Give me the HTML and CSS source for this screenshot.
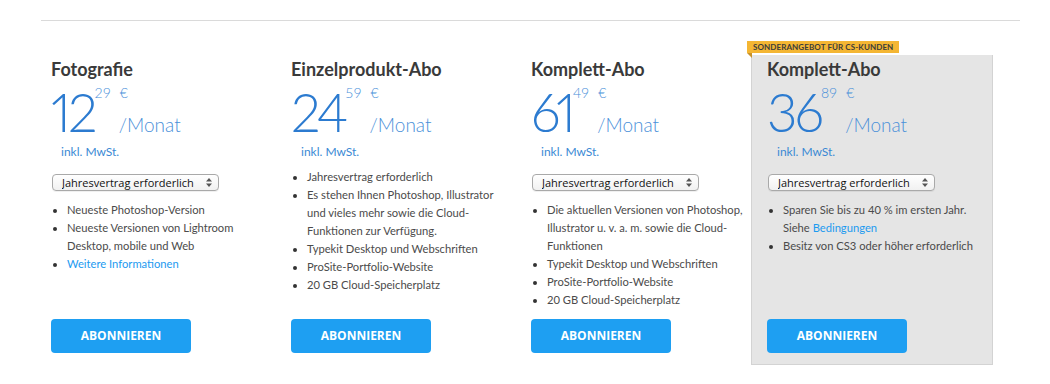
FILE: index.html
```html
<!DOCTYPE html>
<html>
<head>
<title>Abo</title>
<link rel="stylesheet" href="styles.css">
</head>
<body>
<div class="rule"></div>
<div class="plans">

  <div class="plan">
    <div class="name">Fotografie</div>
    <div class="price">
      <span class="big">12</span>
      <span class="cents">29</span>
      <span class="unit"><span>€</span><span class="month">/Monat</span></span>
    </div>
    <div class="tax">inkl. MwSt.</div>
    <div class="pick">
      <select><option>Jahresvertrag erforderlich</option></select>
      <svg class="arrows" width="6" height="9" viewBox="0 0 6 9"><path d="M3 0 L6 3.5 H0 Z M3 9 L6 5.5 H0 Z" fill="#555"/></svg>
    </div>
    <ul class="feats">
      <li>Neueste Photoshop-Version</li>
      <li>Neueste Versionen von Lightroom Desktop, mobile und Web</li>
      <li><a href="#">Weitere Informationen</a></li>
    </ul>
    <a class="buy" href="#">ABONNIEREN</a>
  </div>

  <div class="plan">
    <div class="name">Einzelprodukt-Abo</div>
    <div class="price">
      <span class="big">24</span>
      <span class="cents">59</span>
      <span class="unit"><span>€</span><span class="month">/Monat</span></span>
    </div>
    <div class="tax">inkl. MwSt.</div>
    <ul class="feats">
      <li>Jahresvertrag erforderlich</li>
      <li>Es stehen Ihnen Photoshop, Illustrator und vieles mehr sowie die Cloud-Funktionen zur Verfügung.</li>
      <li>Typekit Desktop und Webschriften</li>
      <li>ProSite-Portfolio-Website</li>
      <li>20 GB Cloud-Speicherplatz</li>
    </ul>
    <a class="buy" href="#">ABONNIEREN</a>
  </div>

  <div class="plan">
    <div class="name">Komplett-Abo</div>
    <div class="price">
      <span class="big">61</span>
      <span class="cents">49</span>
      <span class="unit"><span>€</span><span class="month">/Monat</span></span>
    </div>
    <div class="tax">inkl. MwSt.</div>
    <div class="pick">
      <select><option>Jahresvertrag erforderlich</option></select>
      <svg class="arrows" width="6" height="9" viewBox="0 0 6 9"><path d="M3 0 L6 3.5 H0 Z M3 9 L6 5.5 H0 Z" fill="#555"/></svg>
    </div>
    <ul class="feats">
      <li>Die aktuellen Versionen von Photoshop, Illustrator u. v. a. m. sowie die Cloud-Funktionen</li>
      <li>Typekit Desktop und Webschriften</li>
      <li>ProSite-Portfolio-Website</li>
      <li>20 GB Cloud-Speicherplatz</li>
    </ul>
    <a class="buy" href="#">ABONNIEREN</a>
  </div>

  <div class="plan special">
    <div class="badge">SONDERANGEBOT FÜR CS-KUNDEN</div>
    <div class="name">Komplett-Abo</div>
    <div class="price">
      <span class="big">36</span>
      <span class="cents">89</span>
      <span class="unit"><span>€</span><span class="month">/Monat</span></span>
    </div>
    <div class="tax">inkl. MwSt.</div>
    <div class="pick">
      <select><option>Jahresvertrag erforderlich</option></select>
      <svg class="arrows" width="6" height="9" viewBox="0 0 6 9"><path d="M3 0 L6 3.5 H0 Z M3 9 L6 5.5 H0 Z" fill="#555"/></svg>
    </div>
    <ul class="feats">
      <li>Sparen Sie bis zu 40 % im ersten Jahr. Siehe <a href="#">Bedingungen</a></li>
      <li>Besitz von CS3 oder höher erforderlich</li>
    </ul>
    <a class="buy" href="#">ABONNIEREN</a>
  </div>

</div>
</body>
</html>
```

FILE: styles.css
```css
body {
  margin: 0;
  background: #fff;
  font-family: Lato, "Open Sans", sans-serif;
  color: #4b4b4b;
}

.rule {
  margin: 20px 30px 0 41px;
  border-top: 1px solid #dadada;
}

.plans {
  display: grid;
  grid-template-columns: 240px 240px 220px 242px;
  margin-top: 34px;
  padding-left: 51px;
}

.plan {
  display: flex;
  flex-direction: column;
  align-items: flex-start;
  padding: 3px 24px 12px 0;
  position: relative;
}
.plan:nth-child(3) {
  padding-right: 4px;
}

.special {
  background: #e5e5e5;
  border: 1px solid #d3d3d3;
  border-top: none;
  padding: 3px 10px 11px 15px;
}

.badge {
  position: absolute;
  top: -14px;
  left: -5px;
  height: 12px;
  line-height: 12px;
  padding: 0 6px;
  background: #f4b633;
  color: #3b3b3b;
  font-size: 8px;
  font-weight: 700;
  letter-spacing: 0.1px;
}
.badge::after {
  content: "";
  position: absolute;
  left: 0;
  top: 12px;
  border-top: 5px solid #c8922b;
  border-left: 5px solid transparent;
}

.name {
  font-size: 18px;
  line-height: 22px;
  font-weight: 700;
  color: #3a3a3a;
}

.price {
  display: flex;
  align-items: flex-start;
  margin-top: 6px;
  height: 52px;
  color: #2c7bd0;
}
.big {
  font-size: 53px;
  line-height: 52px;
  font-weight: 300;
  font-variant-numeric: proportional-nums;
  letter-spacing: -3px;
}
.cents {
  font-size: 14px;
  line-height: 14px;
  font-weight: 300;
  color: #4a90d9;
  margin-left: 0;
}
.unit {
  display: flex;
  flex-direction: column;
  margin-left: 9px;
  font-size: 14px;
  line-height: 14px;
  font-weight: 300;
  color: #4a90d9;
}
.month {
  font-size: 19px;
  line-height: 19px;
  margin-top: 15px;
  margin-left: -1px;
}

.tax {
  margin: 6px 0 0 10px;
  font-size: 12px;
  line-height: 16px;
  color: #3a89d4;
}

.pick {
  position: relative;
  display: flex;
  margin: 14px 0 2px 1px;
}
.pick select {
  appearance: none;
  -webkit-appearance: none;
  width: 167px;
  height: 17px;
  padding: 0 0 0 9px;
  border: 1px solid #a9a9a9;
  border-radius: 4px;
  background: linear-gradient(#ffffff, #f1f1f1);
  box-shadow: 0 1px 0 rgba(0, 0, 0, 0.06);
  font-family: "Open Sans", Lato, sans-serif;
  font-size: 11px;
  line-height: 15px;
  color: #111;
}
.arrows {
  position: absolute;
  right: 7px;
  top: 4px;
}

.feats {
  margin: 8px 0 10px 0;
  padding: 0 0 0 16px;
  font-size: 11.2px;
  line-height: 18px;
  list-style: disc;
}
.feats li::marker {
  color: #333;
  font-size: 11px;
}
.feats a {
  color: #1c9af0;
  text-decoration: none;
}

.buy {
  margin-top: auto;
  width: 140px;
  height: 34px;
  line-height: 34px;
  text-align: center;
  background: #1e9ff2;
  border-radius: 4px;
  color: #fff;
  font-family: "Open Sans", Lato, sans-serif;
  font-size: 12px;
  font-weight: 700;
  text-decoration: none;
}
```
